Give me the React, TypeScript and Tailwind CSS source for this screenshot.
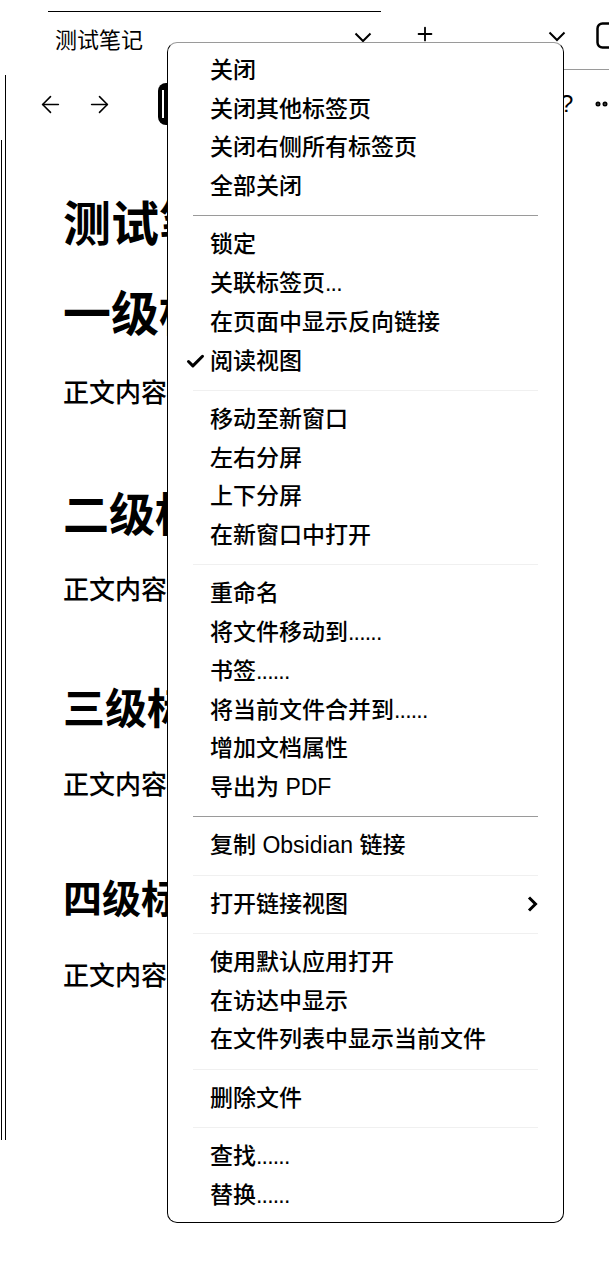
import { ArrowLeft, ArrowRight, Check, Ellipsis, Plus } from "lucide-react";

type Item = { label: string; dots?: string; checked?: boolean; submenu?: boolean };

const groups: { items: Item[]; strong?: boolean }[] = [
  {
    items: [
      { label: "关闭" },
      { label: "关闭其他标签页" },
      { label: "关闭右侧所有标签页" },
      { label: "全部关闭" },
    ],
    strong: true,
  },
  {
    items: [
      { label: "锁定" },
      { label: "关联标签页", dots: "..." },
      { label: "在页面中显示反向链接" },
      { label: "阅读视图", checked: true },
    ],
  },
  {
    items: [
      { label: "移动至新窗口" },
      { label: "左右分屏" },
      { label: "上下分屏" },
      { label: "在新窗口中打开" },
    ],
  },
  {
    items: [
      { label: "重命名" },
      { label: "将文件移动到", dots: "......" },
      { label: "书签", dots: "......" },
      { label: "将当前文件合并到", dots: "......" },
      { label: "增加文档属性" },
      { label: "导出为 PDF" },
    ],
    strong: true,
  },
  { items: [{ label: "复制 Obsidian 链接" }] },
  { items: [{ label: "打开链接视图", submenu: true }] },
  {
    items: [
      { label: "使用默认应用打开" },
      { label: "在访达中显示" },
      { label: "在文件列表中显示当前文件" },
    ],
  },
  { items: [{ label: "删除文件" }] },
  { items: [{ label: "查找", dots: "......" }, { label: "替换", dots: "......" }] },
];

const Chevron = ({ className }: { className?: string }) => (
  <svg width="18" height="11" viewBox="0 0 18 11" className={className}>
    <polyline points="1.5,1.5 9,9 16.5,1.5" fill="none" stroke="black" strokeWidth="2" />
  </svg>
);

const TabMenu = () => (
  <div className="absolute left-[167px] top-[42px] w-[397px] rounded-[10px] border border-black border-t-[#9a9a9a] bg-white pt-[8px] pb-[7.5px] text-black">
    {groups.map((g, gi) => (
      <div key={gi}>
        {g.items.map((it) => (
          <div key={it.label} className="flex h-[38.75px] items-center pr-[25px] text-[23px] font-medium leading-none">
            <div className="flex w-[42px] shrink-0 items-center pl-[17px]">
              {it.checked && <Check size={21} strokeWidth={3.5} />}
            </div>
            <span className="flex-1">
              {it.label}
              {it.dots && <span className="tracking-[-0.8px]">{it.dots}</span>}
            </span>
            {it.submenu && (
              <svg width="11" height="16" viewBox="0 0 11 16">
                <polyline points="2,1.5 8.5,8 2,14.5" fill="none" stroke="black" strokeWidth="3" />
              </svg>
            )}
          </div>
        ))}
        {gi < groups.length - 1 && (
          <div className="flex h-[19.5px] items-center px-[25px]">
            <div className={g.strong ? "h-px w-full bg-[#9a9a9a]" : "h-px w-full bg-[#f0f0f0]"} />
          </div>
        )}
      </div>
    ))}
  </div>
);

export default function App() {
  return (
    <div className="relative h-[1280px] w-[609px] overflow-hidden bg-white text-black [font-family:'Liberation_Sans','Noto_Sans_CJK_SC',sans-serif]">
      {/* tab bar */}
      <div className="flex h-[70px] items-start">
        <div className="ml-[48px] mt-[11px] flex h-[59px] w-[333px] shrink-0 items-center justify-between border-t-[1.5px] border-black pl-[7px] pr-[9px]">
          <span className="text-[22px] leading-none">测试笔记</span>
          <Chevron className="mt-[-8px]" />
        </div>
        <div className="flex h-[70px] min-w-0 flex-1 items-start border-b border-[#9a9a9a] pt-[23px]">
          <Plus size={22} strokeWidth={2} className="ml-[33px] shrink-0" />
          <Chevron className="ml-[112px] mt-[8px] shrink-0" />
          <svg width="30" height="28" viewBox="0 0 30 28" className="ml-[30px] mt-[-1px] shrink-0">
            <rect x="1.5" y="1.5" width="30" height="24" rx="5" fill="none" stroke="black" strokeWidth="2.5" />
          </svg>
        </div>
      </div>

      <div className="flex">
        {/* left gutter */}
        <div className="w-[5px] shrink-0">
          <div className="ml-px mt-[70px] h-[1000px] w-px bg-black" />
        </div>

        <div className="mt-[5px] flex-1 border-l border-black">
          {/* nav row */}
          <div className="flex h-[58px] items-center">
            <ArrowLeft size={27} strokeWidth={1.4} className="ml-[31px] shrink-0" />
            <ArrowRight size={27} strokeWidth={1.4} className="ml-[22px] shrink-0" />
            <div className="ml-[45px] flex h-[42px] w-[50px] shrink-0 items-center rounded-[8px] bg-black pl-[4px]">
              <div className="h-[28px] w-[1.5px] bg-white" />
            </div>
            <span className="ml-[352px] text-[24px] font-medium leading-none">?</span>
            <Ellipsis size={24} strokeWidth={3} className="ml-[20px] shrink-0" />
          </div>

          {/* note content */}
          <div className="whitespace-nowrap pl-[57px]">
            <div className="mt-[62px] text-[48px] font-bold leading-[60px]">测试笔记</div>
            <h1 className="mt-[30px] text-[48px] font-bold leading-[60px]">一级标题</h1>
            <p className="mt-[28px] text-[26px] font-medium leading-[40px]">正文内容</p>
            <h2 className="mt-[72px] text-[46px] font-bold leading-[60px]">二级标题</h2>
            <p className="mt-[25px] text-[26px] font-medium leading-[40px]">正文内容</p>
            <h3 className="mt-[72px] text-[42px] font-bold leading-[56px]">三级标题</h3>
            <p className="mt-[27px] text-[26px] font-medium leading-[40px]">正文内容</p>
            <h4 className="mt-[69px] text-[39px] font-bold leading-[52px]">四级标题</h4>
            <p className="mt-[30px] text-[26px] font-medium leading-[40px]">正文内容</p>
          </div>
        </div>
      </div>

      <TabMenu />
    </div>
  );
}
